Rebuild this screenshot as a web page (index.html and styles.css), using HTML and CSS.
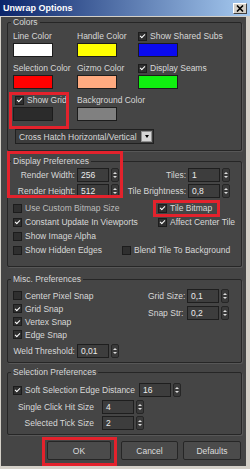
FILE: index.html
```html
<!DOCTYPE html>
<html lang="en">

<head>
    <meta charset="UTF-8">
    <meta name="viewport" content="width=device-width, initial-scale=1.0">
    <title>Unwrap Options</title>
    <link rel="stylesheet" href="styles.css">
</head>

<body>
    <div class="window">
        <div class="titlebar">
            <span class="title">Unwrap Options</span>
            <span class="close">
                <svg width="8" height="7" viewBox="0 0 8 7"><path d="M1 0.5 L7 6.5 M7 0.5 L1 6.5" stroke="#000" stroke-width="1.6"/></svg>
            </span>
        </div>

        <div class="content">
            <fieldset class="group colors">
                <legend>Colors</legend>
                <div class="swatches">
                    <div class="cell"><span class="label">Line Color</span><span class="swatch white"></span></div>
                    <div class="cell"><span class="label">Handle Color</span><span class="swatch yellow"></span></div>
                    <div class="cell"><span class="label check"><span class="box on"></span>Show Shared Subs</span><span class="swatch blue"></span></div>
                    <div class="cell"><span class="label">Selection Color</span><span class="swatch red"></span></div>
                    <div class="cell"><span class="label">Gizmo Color</span><span class="swatch salmon"></span></div>
                    <div class="cell"><span class="label check"><span class="box on"></span>Display Seams</span><span class="swatch green"></span></div>
                    <div class="cell"><span class="label check grid-check"><span class="box on"></span>Show Grid</span><span class="swatch dark"></span></div>
                    <div class="cell"><span class="label">Background Color</span><span class="swatch gray"></span></div>
                </div>
                <div class="select">
                    <span>Cross Hatch Horizontal/Vertical</span>
                    <span class="arrow"></span>
                </div>
            </fieldset>

            <fieldset class="group display">
                <legend>Display Preferences</legend>
                <div class="frow">
                    <span class="lbl lbl-render">Render Width:</span><span class="num">256</span><span class="spin"></span>
                    <span class="lbl lbl-tiles">Tiles:</span><span class="num">1</span><span class="spin"></span>
                </div>
                <div class="frow">
                    <span class="lbl lbl-render">Render Height:</span><span class="num">512</span><span class="spin"></span>
                    <span class="lbl lbl-tiles">Tile Brightness:</span><span class="num">0,8</span><span class="spin"></span>
                </div>
                <div class="crows">
                    <div class="crow">
                        <span class="check wide dim"><span class="box"></span>Use Custom Bitmap Size</span>
                        <span class="check"><span class="box on"></span>Tile Bitmap</span>
                    </div>
                    <div class="crow">
                        <span class="check wide"><span class="box on"></span>Constant Update In Viewports</span>
                        <span class="check"><span class="box on"></span>Affect Center Tile</span>
                    </div>
                    <div class="crow">
                        <span class="check"><span class="box"></span>Show Image Alpha</span>
                    </div>
                    <div class="crow">
                        <span class="check narrow"><span class="box"></span>Show Hidden Edges</span>
                        <span class="check"><span class="box"></span>Blend Tile To Background</span>
                    </div>
                </div>
            </fieldset>

            <fieldset class="group misc">
                <legend>Misc. Preferences</legend>
                <div class="misc-top">
                    <div class="misc-checks">
                        <span class="check"><span class="box"></span>Center Pixel Snap</span>
                        <span class="check"><span class="box on"></span>Grid Snap</span>
                        <span class="check"><span class="box on"></span>Vertex Snap</span>
                        <span class="check"><span class="box on"></span>Edge Snap</span>
                    </div>
                    <div class="misc-fields">
                        <div class="frow">
                            <span class="lbl lbl-snap">Grid Size:</span><span class="num">0,1</span><span class="spin"></span>
                        </div>
                        <div class="frow">
                            <span class="lbl lbl-snap">Snap Str:</span><span class="num">0,2</span><span class="spin"></span>
                        </div>
                    </div>
                </div>
                <div class="frow weld">
                    <span class="lbl lbl-render">Weld Threshold:</span><span class="num">0,01</span><span class="spin"></span>
                </div>
            </fieldset>

            <fieldset class="group selection">
                <legend>Selection Preferences</legend>
                <div class="frow">
                    <span class="check soft"><span class="box on"></span>Soft Selection Edge Distance</span><span class="num">16</span><span class="spin"></span>
                </div>
                <div class="frow hit">
                    <span class="lbl lbl-hit">Single Click Hit Size</span><span class="num">4</span><span class="spin"></span>
                </div>
                <div class="frow tick">
                    <span class="lbl lbl-hit">Selected Tick Size</span><span class="num">2</span><span class="spin"></span>
                </div>
            </fieldset>

            <div class="buttons">
                <button class="btn ok">OK</button>
                <button class="btn cancel">Cancel</button>
                <button class="btn defaults">Defaults</button>
            </div>
        </div>

        <div class="mark mark-grid"></div>
        <div class="mark mark-display"></div>
        <div class="mark mark-tile"></div>
        <div class="mark mark-ok"></div>
    </div>
</body>

</html>
```

FILE: styles.css
```css
body {
    margin: 0;
    font-family: "Liberation Sans", Arial, sans-serif;
    font-size: 8.5px;
    color: #d8d8d8;
}

.window {
    position: relative;
    width: 250px;
    height: 469px;
    background-color: #d4d0c8;
    display: flex;
    flex-direction: column;
}

.titlebar {
    height: 16px;
    flex-shrink: 0;
    display: flex;
    justify-content: space-between;
    align-items: center;
    padding: 0 3px 0 3px;
    background: linear-gradient(to right, #0a246a, #a6caf0);
}

.title {
    color: white;
    font-weight: bold;
    font-size: 9px;
}

.close {
    width: 14px;
    height: 11px;
    box-sizing: border-box;
    background-color: #d4d0c8;
    border: 1px solid;
    border-color: #ffffff #404040 #404040 #ffffff;
    display: flex;
    justify-content: center;
    align-items: center;
}

.content {
    flex: 1;
    margin: 1px 4px 3px 1px;
    padding: 0 4px 0 6px;
    background-color: #454545;
}

.group {
    margin: 0;
    min-width: 0;
    border: 1px solid #262626;
    border-radius: 2px;
    box-shadow: 1px 1px 0 #575757;
}

.group legend {
    padding: 0 2px;
    margin-left: -2px;
    line-height: 10px;
}

.colors {
    padding: 3px 5px 6px;
}

.display {
    margin-top: 5px;
    padding: 2px 5px 9px;
}

.misc {
    margin-top: 7px;
    padding: 5px 5px 4px;
}

.selection {
    margin-top: 4px;
    padding: 6px 5px 4px;
}

.swatches {
    display: grid;
    grid-template-columns: 64px 61px 1fr;
    row-gap: 5px;
}

.cell {
    display: flex;
    flex-direction: column;
    align-items: flex-start;
}

.cell .label {
    height: 12px;
    line-height: 12px;
    white-space: nowrap;
}

.swatch {
    width: 40px;
    height: 14px;
    margin-top: 1px;
    box-sizing: border-box;
    border: 1px solid #1c1c1c;
}

.white { background-color: #ffffff; }
.yellow { background-color: #ffff00; }
.blue { background-color: #0a0af0; }
.red { background-color: #ff0000; }
.salmon { background-color: #ffaa80; }
.green { background-color: #10f010; }
.dark { background-color: #2b2b2b; }
.gray { background-color: #808080; }

.check {
    display: flex;
    align-items: center;
    gap: 3px;
    white-space: nowrap;
}

.grid-check {
    margin-left: 2px;
}

.box {
    width: 9px;
    height: 9px;
    box-sizing: border-box;
    background-color: #2f2f2f;
    border: 1px solid #1c1c1c;
    display: flex;
    justify-content: center;
    align-items: center;
    flex-shrink: 0;
}

.box.on::after {
    content: "";
    width: 2px;
    height: 4px;
    margin-top: -1px;
    border: solid #ffffff;
    border-width: 0 1.5px 1.5px 0;
    transform: rotate(45deg);
}

.dim {
    color: #bdbdbd;
}

.select {
    margin-top: 8px;
    margin-left: 2px;
    width: 139px;
    height: 15px;
    box-sizing: border-box;
    border: 1px solid #202020;
    background-color: #3c3c3c;
    display: flex;
    align-items: center;
}

.select span:first-child {
    flex: 1;
    padding-left: 3px;
}

.select .arrow {
    width: 11px;
    height: 11px;
    margin-right: 1px;
    box-sizing: border-box;
    background-color: #d6d6d6;
    border: 1px solid #909090;
    display: flex;
    justify-content: center;
    align-items: center;
}

.select .arrow::after {
    content: "";
    border-left: 2.5px solid transparent;
    border-right: 2.5px solid transparent;
    border-top: 3px solid #000000;
}

.frow {
    display: flex;
    align-items: center;
    height: 14px;
}

.display .frow + .frow {
    margin-top: 2px;
}

.lbl {
    flex-shrink: 0;
    text-align: right;
    white-space: nowrap;
}

.lbl-render { width: 62px; }
.lbl-tiles { width: 67px; }
.lbl-snap { width: 34px; }
.lbl-hit { width: 81px; }

.num {
    width: 32px;
    height: 14px;
    margin-left: 2px;
    box-sizing: border-box;
    padding-left: 3px;
    line-height: 12px;
    background-color: #3d3d3d;
    border: 1px solid #1e1e1e;
    color: #ececec;
    flex-shrink: 0;
}

.spin {
    width: 8px;
    height: 14px;
    margin-left: 2px;
    box-sizing: border-box;
    background-color: #3a3a3a;
    border: 1px solid #262626;
    border-radius: 2px;
    display: flex;
    flex-direction: column;
    justify-content: center;
    align-items: center;
    gap: 2px;
    flex-shrink: 0;
}

.spin::before {
    content: "";
    border-left: 2px solid transparent;
    border-right: 2px solid transparent;
    border-bottom: 2px solid #dddddd;
}

.spin::after {
    content: "";
    border-left: 2px solid transparent;
    border-right: 2px solid transparent;
    border-top: 2px solid #dddddd;
}

.crows {
    margin-top: 3px;
}

.crow {
    display: flex;
    align-items: center;
    height: 14px;
}

.crow .wide { width: 145px; }
.crow .narrow { width: 109px; }

.misc-top {
    display: flex;
}

.misc-checks {
    width: 135px;
}

.misc-checks .check {
    height: 13px;
}

.misc-fields {
    display: flex;
    flex-direction: column;
    gap: 3px;
}

.misc-fields .num {
    margin-left: 5px;
}

.weld {
    margin-top: 3px;
}

.soft {
    width: 124px;
}

.hit {
    margin-top: 3px;
}

.hit .num,
.tick .num {
    margin-left: 8px;
}

.tick {
    margin-top: 2px;
}

.buttons {
    display: flex;
    margin-top: 6px;
    padding-left: 40px;
}

.btn {
    height: 19px;
    padding: 0;
    box-sizing: border-box;
    font-family: inherit;
    font-size: 8.5px;
    color: #dcdcdc;
    background-color: #4b4b4b;
    border: 1px solid #262626;
    border-radius: 2px;
}

.ok { width: 64px; }
.cancel { width: 57px; margin-left: 10px; }
.defaults { width: 58px; margin-left: 5px; }

.mark {
    position: absolute;
    box-sizing: border-box;
    border: 3px solid #e3222c;
}

.mark-grid {
    left: 9px;
    top: 92px;
    width: 60px;
    height: 37px;
}

.mark-display {
    left: 7px;
    top: 151px;
    width: 116px;
    height: 47px;
}

.mark-tile {
    left: 153px;
    top: 200px;
    width: 67px;
    height: 17px;
}

.mark-ok {
    left: 42px;
    top: 437px;
    width: 75px;
    height: 29px;
}
```
